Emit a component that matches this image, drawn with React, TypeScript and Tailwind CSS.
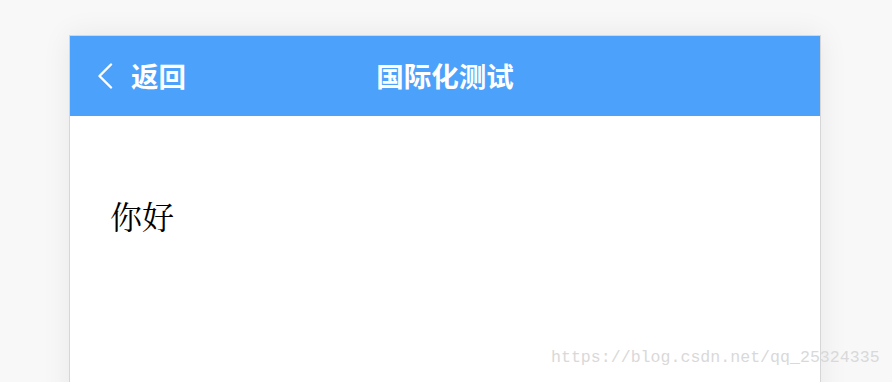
import React from "react";

const cjk = { fontFamily: '"Noto Sans CJK SC", sans-serif' };

export default function App() {
  return (
    <div className="relative w-[892px] h-[382px] overflow-hidden bg-[#f8f8f8]">
      <div className="pt-[35px] pl-[69px]">
        <div className="w-[752px] h-[400px] border border-[#d6d6d6] bg-white shadow-[0_0_28px_rgba(0,0,0,0.07)]">
          <div className="relative h-[80px] bg-[#4ca1fb] flex items-center text-white" style={cjk}>
            <div className="flex items-center pl-[27px]">
              <svg width="16" height="26" viewBox="0 0 16 26" fill="none">
                <path d="M14 1.5 L2.5 13 L14 24.5" stroke="white" strokeWidth="2.4" strokeLinecap="round" strokeLinejoin="round" />
              </svg>
              <span className="ml-[18px] text-[27.5px] font-bold leading-none">返回</span>
            </div>
            <div className="absolute inset-0 flex items-center justify-center text-[27.5px] font-bold leading-none pointer-events-none">
              国际化测试
            </div>
          </div>
          <div className="pt-[83px] pl-[40px]">
            <p className="text-[32px] leading-none text-black" style={{ fontFamily: '"Noto Serif CJK SC", "Noto Sans CJK SC", serif' }}>
              你好
            </p>
          </div>
        </div>
      </div>
      <div className="absolute left-[551px] top-[350px] text-[16.6px] leading-none text-[#d9d9d9]" style={{ fontFamily: '"Liberation Mono", monospace' }}>
        https://blog.csdn.net/qq_25324335
      </div>
    </div>
  );
}
